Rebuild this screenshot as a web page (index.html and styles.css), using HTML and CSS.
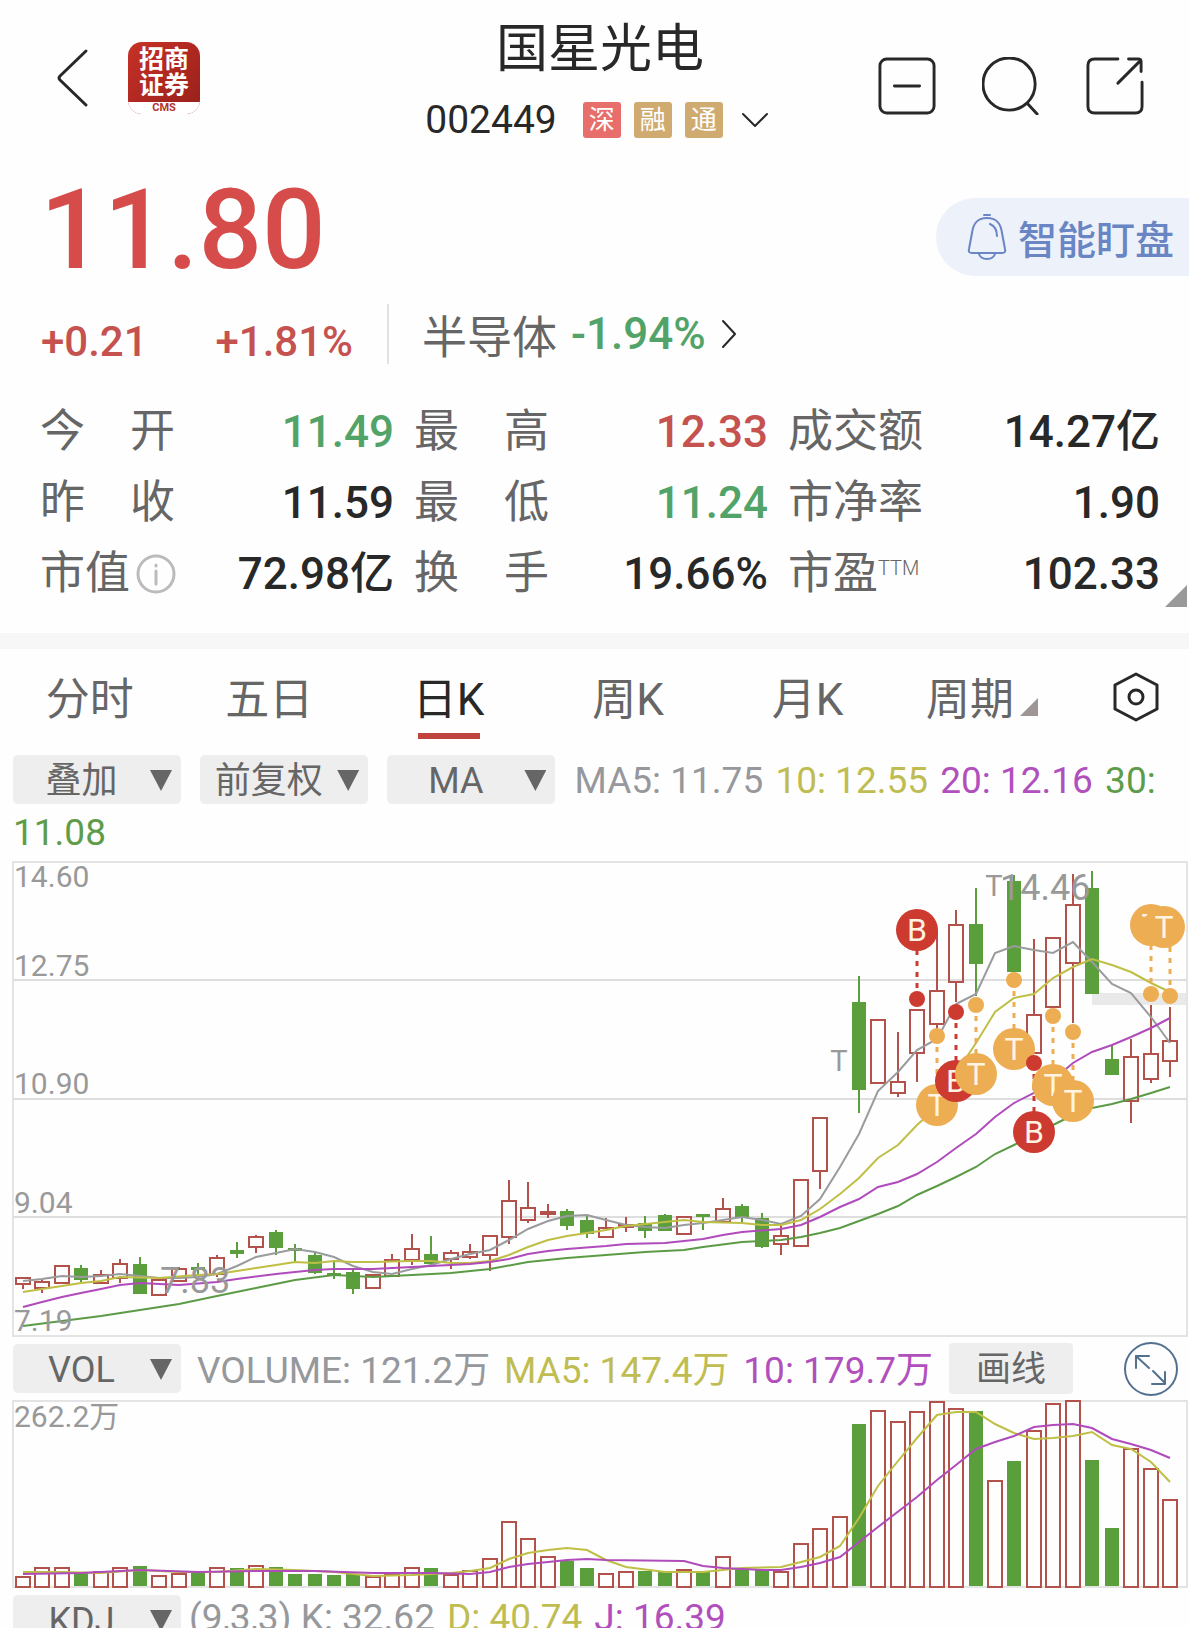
FILE: index.html
```
<!DOCTYPE html>
<html lang="zh-CN">

<head>
  <meta charset="utf-8">
  <meta name="viewport" content="width=device-width, initial-scale=1.0">
  <title>国星光电 002449</title>
  <link rel="stylesheet" href="styles.css">
</head>

<body>
  <header class="header">
    <div class="header-left">
      <button class="icon-button" aria-label="返回">
        <svg width="34" height="60" viewBox="0 0 34 60"><path d="M30 3 4 28q-2 2 0 4L30 57" /></svg>
      </button>
      <div class="broker">
        <div class="broker-name">招商<br>证券</div>
        <div class="broker-code">CMS</div>
      </div>
    </div>

    <div class="header-title">
      <h1>国星光电</h1>
      <div class="code-row">
        <span class="code">002449</span>
        <span class="tag tag-red">深</span>
        <span class="tag">融</span>
        <span class="tag">通</span>
        <button class="icon-button" aria-label="展开">
          <svg width="28" height="16" viewBox="0 0 28 16"><path d="M2 2l12 12L26 2" /></svg>
        </button>
      </div>
    </div>

    <div class="header-right">
      <button class="icon-button" aria-label="删除自选">
        <svg width="58" height="58" viewBox="0 0 60 60"><rect x="2" y="2" width="56" height="56" rx="7" /><path d="M17 30h26" /></svg>
      </button>
      <button class="icon-button" aria-label="搜索">
        <svg width="58" height="58" viewBox="0 0 60 60"><circle cx="28" cy="28" r="27" /><path d="M47 48l10 11" /></svg>
      </button>
      <button class="icon-button" aria-label="分享">
        <svg width="58" height="58" viewBox="0 0 60 60"><path d="M33 2H9Q2 2 2 9v42q0 7 7 7h42q7 0 7-7V26M44 2h10q3 0 3 3v10M56 4 33 27" /></svg>
      </button>
    </div>
  </header>

  <section class="price-row">
    <div class="price">11.80</div>
    <button class="watch-button">
      <svg width="40" height="48" viewBox="0 0 40 48"><path d="M17 2h6M20 5C9 5 6 12 5 20L2 36q-1 4 3 4h30q4 0 3-4l-3-16C34 12 31 5 20 5zM12 40c0 8 16 8 16 0M23 11q7 3 7 12" /></svg>
      智能盯盘
    </button>
  </section>

  <section class="change-row">
    <div class="change">
      <span>+0.21</span>
      <span>+1.81%</span>
    </div>
    <a class="sector" href="#">
      半导体
      <span class="sector-change">-1.94%</span>
      <svg width="18" height="30" viewBox="0 0 18 30"><path d="M3 2l12 13L3 28" /></svg>
    </a>
  </section>

  <section class="stats">
    <div class="stat"><span class="label">今　开</span><span class="down">11.49</span></div>
    <div class="stat"><span class="label">最　高</span><span class="up">12.33</span></div>
    <div class="stat"><span class="label">成交额</span><span>14.27亿</span></div>
    <div class="stat"><span class="label">昨　收</span><span>11.59</span></div>
    <div class="stat"><span class="label">最　低</span><span class="down">11.24</span></div>
    <div class="stat"><span class="label">市净率</span><span>1.90</span></div>
    <div class="stat">
      <span class="label">市值<svg class="info" width="40" height="40" viewBox="0 0 40 40"><circle cx="20" cy="20" r="18" /><path d="M20 17v13M20 11v1" /></svg></span>
      <span>72.98亿</span>
    </div>
    <div class="stat"><span class="label">换　手</span><span>19.66%</span></div>
    <div class="stat"><span class="label">市盈<sup>TTM</sup></span><span>102.33</span></div>
    <span class="stats-corner"></span>
  </section>

  <nav class="tabs">
    <button class="tab">分时</button>
    <button class="tab">五日</button>
    <button class="tab active">日K</button>
    <button class="tab">周K</button>
    <button class="tab">月K</button>
    <button class="tab more">周期</button>
    <button class="icon-button" aria-label="设置">
      <svg width="46" height="50" viewBox="0 0 46 50"><path d="M23 2 44 13v24L23 48 2 37V13z" /><circle cx="23" cy="25" r="7" /></svg>
    </button>
  </nav>

  <section class="ma-bar">
    <label class="picker"><select aria-label="叠加"><option>叠加</option></select></label>
    <label class="picker"><select aria-label="复权"><option>前复权</option></select></label>
    <label class="picker"><select aria-label="主图指标"><option>MA</option></select></label>
    <span class="gray">MA5: 11.75</span>
    <span class="yellow">10: 12.55</span>
    <span class="purple">20: 12.16</span>
    <span class="green">30: 11.08</span>
  </section>

  <svg class="chart" id="kline" viewBox="0 0 1189 476"></svg>

  <section class="indicator">
    <label class="picker"><select aria-label="副图指标"><option>VOL</option></select></label>
    <div class="legend legend-vol">
      <span class="gray">VOLUME: 121.2万</span>
      <span class="yellow">MA5: 147.4万</span>
      <span class="purple">10: 179.7万</span>
    </div>
    <button class="draw-button">画线</button>
    <button class="icon-button expand" aria-label="全屏">
      <svg width="56" height="56" viewBox="0 0 56 56"><circle cx="28" cy="28" r="26" /><path d="M13 27V15h13M13 15l13 12M30 30l12 12M29 43h13V31" /></svg>
    </button>
  </section>

  <svg class="chart" id="volume" viewBox="0 0 1189 188"></svg>

  <section class="indicator">
    <label class="picker"><select aria-label="副图指标二"><option>KDJ</option></select></label>
    <div class="legend">
      <span class="gray">(9,3,3) K: 32.62</span>
      <span class="yellow">D: 40.74</span>
      <span class="purple">J: 16.39</span>
    </div>
  </section>

  <script src="chart.js"></script>
</body>

</html>
```
FILE: styles.css
```
* {
  margin: 0;
  padding: 0;
  box-sizing: border-box;
}

body {
  height: 100vh;
  overflow: hidden;
  background: #fefefe;
  color: #282828;
  font-family: Roboto, "Noto Sans CJK SC", sans-serif;
}

button,
select {
  border: none;
  background: none;
  color: inherit;
  font: inherit;
  cursor: pointer;
}

svg {
  display: block;
  fill: none;
  stroke: #282828;
  stroke-width: 3;
  stroke-linecap: round;
  stroke-linejoin: round;
}

.up {
  color: #c5524f;
}

.down {
  color: #52a368;
}

.gray {
  color: #96989c;
}

.yellow {
  color: #bfbc52;
}

.purple {
  color: #b150bd;
}

.green {
  color: #5f9c4a;
}

/* Header */
.header {
  display: grid;
  grid-template-columns: 1fr auto 1fr;
  padding: 16px 45px 0 56px;
}

.header-left {
  display: flex;
  align-items: center;
  gap: 38px;
}

.broker {
  width: 72px;
  height: 72px;
  border-radius: 14px;
  overflow: hidden;
  background: linear-gradient(135deg, #c73127, #96201a);
  color: #fff;
  text-align: center;
}

.broker-name {
  height: 60px;
  padding-top: 5px;
  font-size: 25px;
  font-weight: 700;
  line-height: 26px;
}

.broker-code {
  height: 12px;
  background: #fff;
  color: #b3352e;
  font-size: 11px;
  font-weight: 700;
  line-height: 12px;
}

.header-title {
  text-align: center;
}

h1 {
  padding-top: 2px;
  font-size: 52px;
  font-weight: 400;
  line-height: 64px;
}

.code-row {
  display: flex;
  align-items: center;
  justify-content: center;
  gap: 13px;
  height: 40px;
  margin-top: 18px;
  padding-right: 6px;
}

.code {
  margin-right: 13px;
  font-size: 39px;
}

.tag {
  width: 38px;
  height: 36px;
  border-radius: 3px;
  background: #d0ab70;
  color: #fff;
  font-size: 26px;
  line-height: 36px;
}

.tag-red {
  background: #e76e6b;
}

.code-row .icon-button {
  margin-left: 5px;
}

.code-row svg,
.sector svg {
  stroke-width: 2;
}

.header-right {
  display: flex;
  align-items: center;
  justify-content: flex-end;
  gap: 46px;
  padding-top: 16px;
}

/* Price */
.price-row {
  display: flex;
  align-items: center;
  justify-content: space-between;
  height: 120px;
  margin-top: 37px;
  padding-left: 40px;
}

.price {
  padding-bottom: 14px;
  color: #d64c4a;
  font-size: 112px;
  font-weight: 500;
  line-height: 106px;
}

.watch-button {
  display: flex;
  align-items: center;
  gap: 11px;
  height: 78px;
  padding: 0 15px 0 31px;
  border-radius: 39px 0 0 39px;
  background: #edf1f9;
  color: #6985c4;
  font-size: 39px;
  font-weight: 500;
}

.watch-button svg {
  stroke: #6985c4;
  stroke-width: 2;
}

.change-row {
  display: flex;
  align-items: flex-start;
  height: 99px;
  padding: 7px 0 0 41px;
}

.change {
  display: flex;
  justify-content: space-between;
  width: 348px;
  padding: 16px 34px 0 0;
  border-right: 2px solid #e2e2e2;
  color: #c5524f;
  font-size: 42px;
  font-weight: 500;
  line-height: 44px;
}

.sector {
  display: flex;
  align-items: center;
  gap: 14px;
  height: 60px;
  padding-left: 33px;
  color: #666;
  font-size: 45px;
  text-decoration: none;
}

.sector-change {
  color: #52a368;
  font-size: 44px;
  font-weight: 500;
}

/* Stats */
.stats {
  position: relative;
  display: grid;
  grid-template-columns: 354fr 354fr 372fr;
  grid-auto-rows: 71px;
  column-gap: 20px;
  padding: 0 29px 24px 40px;
  border-bottom: 16px solid #f7f7f7;
}

.stat {
  display: flex;
  align-items: baseline;
  justify-content: space-between;
  font-size: 44px;
  font-weight: 500;
  line-height: 71px;
  white-space: nowrap;
}

.label {
  display: flex;
  align-items: center;
  color: #666;
  font-size: 45px;
  font-weight: 400;
}

.label sup {
  align-self: flex-start;
  font-size: 20px;
  font-weight: 300;
  line-height: 60px;
}

.info {
  margin-left: 6px;
  stroke: #bbb;
}

.stats-corner {
  position: absolute;
  right: 2px;
  bottom: 26px;
  width: 22px;
  height: 22px;
  background: #999;
  clip-path: polygon(100% 0, 100% 100%, 0 100%);
}

/* Period tabs */
.tabs {
  display: grid;
  grid-template-columns: repeat(6, 179fr) 112fr;
  height: 104px;
}

.tab {
  display: flex;
  align-items: center;
  justify-content: center;
  position: relative;
  padding-bottom: 10px;
  color: #666;
  font-size: 44px;
}

.tab.active {
  color: #282828;
}

.tab.active::after {
  content: "";
  position: absolute;
  bottom: 14px;
  width: 62px;
  height: 6px;
  background: #c0443b;
}

.tab.more {
  gap: 6px;
  padding-right: 10px;
}

.more::after {
  content: "";
  width: 18px;
  height: 18px;
  margin-top: 22px;
  background: #9d9694;
  clip-path: polygon(100% 0, 100% 100%, 0 100%);
}

.tabs .icon-button {
  padding: 0 0 8px 36px;
}

/* Indicator bars */
.ma-bar {
  padding: 2px 13px;
  font-size: 37px;
  line-height: 52px;
}

.ma-bar .picker {
  margin-right: 10px;
}

.ma-bar span {
  margin-right: 3px;
}

.picker {
  display: inline-block;
  position: relative;
  width: 168px;
  height: 49px;
  flex-shrink: 0;
  vertical-align: top;
}

.picker select {
  display: block;
  width: 100%;
  height: 100%;
  padding: 3px 31px 0 0;
  border-radius: 5px;
  background: #eee;
  color: #666;
  font-size: 36px;
  line-height: 46px;
  text-align-last: center;
  appearance: none;
}

.picker::after {
  content: "";
  position: absolute;
  top: 15px;
  right: 9px;
  width: 22px;
  height: 21px;
  background: #666;
  clip-path: polygon(0 0, 100% 0, 50% 100%);
  pointer-events: none;
}

.indicator {
  display: flex;
  align-items: center;
  height: 63px;
  padding: 0 10px 0 13px;
}

.legend {
  display: flex;
  gap: 12px;
  padding: 0 0 4px 8px;
  font-size: 37px;
  white-space: nowrap;
}

.legend-vol {
  flex: 0 1 752px;
  justify-content: space-between;
  padding-left: 16px;
}

.draw-button {
  width: 124px;
  height: 51px;
  margin-left: 16px;
  padding-top: 3px;
  border-radius: 4px;
  background: #eee;
  color: #666;
  font-size: 35px;
  line-height: 48px;
}

.expand {
  margin-left: auto;
}

.expand svg {
  stroke: #53708f;
  stroke-width: 2;
}

/* Charts */
.chart {
  width: 100%;
  stroke-width: 2;
  stroke-linecap: butt;
  stroke-linejoin: miter;
}

.chart text {
  fill: #999;
  stroke: none;
}

.frame {
  stroke: #e4e4e4;
}

.grid {
  stroke: #dedede;
}

.axis {
  font-size: 30px;
}

.peak {
  font-size: 36px;
}

.limit {
  font-size: 29px;
  text-anchor: middle;
}

.gap-zone {
  fill: #e9e9e9;
  stroke: none;
}

.rise {
  stroke: #b2524b;
}

.fall {
  fill: #5a9f3c;
  stroke: #5a9f3c;
}

.line-gray {
  stroke: #999b9d;
}

.line-yellow {
  stroke: #bfbf45;
}

.line-purple {
  stroke: #b04bbb;
}

.line-green {
  stroke: #5c9b45;
}

.buy {
  fill: #cc3a30;
  stroke: #cc3a30;
}

.sell {
  fill: #edad53;
  stroke: #edad53;
}

.leader {
  stroke-width: 3;
  stroke-dasharray: 5 6;
}

.bubble {
  stroke: none;
}

.chart .bubble-text {
  fill: #fff3e2;
  font-size: 32px;
  text-anchor: middle;
}
```
FILE: chart.js
```
const NS = 'http://www.w3.org/2000/svg';
const STEP = 1147 / 59;

// [rise, body top, body bottom, high, low]
const candles = [
  [1, 417, 423, 416, 428], [1, 421, 427, 419, 432], [1, 405, 422, 404, 423], [0, 408, 418, 404, 421],
  [1, 414, 422, 409, 423], [1, 403, 417, 398, 422], [0, 404, 432, 396, 433], [1, 419, 434, 418, 435],
  [1, 408, 420, 406, 421], [0, 407, 408, 402, 414], [1, 397, 413, 394, 416], [0, 390, 392, 381, 397],
  [1, 376, 386, 374, 392], [0, 372, 386, 369, 394], [0, 388, 389, 383, 402], [0, 395, 411, 391, 413],
  [0, 413, 414, 399, 418], [0, 412, 427, 409, 433], [1, 414, 427, 413, 428], [1, 399, 415, 393, 416],
  [1, 388, 399, 373, 404], [0, 394, 402, 375, 404], [1, 392, 398, 389, 408], [1, 391, 396, 383, 398],
  [1, 375, 394, 374, 410], [1, 340, 376, 319, 383], [1, 347, 359, 321, 362], [1, 351, 353, 343, 357],
  [0, 351, 364, 348, 369], [0, 360, 372, 355, 377], [1, 367, 376, 357, 377], [1, 364, 366, 356, 371],
  [0, 363, 369, 355, 377], [0, 355, 369, 353, 370], [1, 356, 373, 355, 374], [0, 354, 355, 353, 369],
  [1, 348, 361, 337, 362], [0, 346, 356, 343, 361], [0, 358, 385, 352, 387], [1, 375, 383, 364, 394],
  [1, 319, 385, 318, 386], [1, 257, 310, 256, 328], null, [0, 142, 228, 115, 252],
  [1, 159, 222, 158, 223], [1, 221, 232, 171, 236], [1, 149, 192, 148, 221], [1, 130, 163, 69, 168],
  [1, 64, 121, 49, 141], [0, 64, 102, 27, 135], null, [0, 21, 110, 14, 110],
  [1, 154, 192, 78, 193], [1, 77, 146, 76, 147], [1, 44, 102, 13, 162], [0, 28, 132, 10, 132],
  [0, 199, 213, 184, 213], [1, 196, 240, 178, 262], [1, 193, 218, 144, 222], [1, 180, 200, 146, 216]
];

const priceLines = {
  gray: '0,420 1,418 2,415 3,416 4,415 5,413 6,415 7,417 8,417 9,416 10,413 11,405 12,396 13,392 14,388 15,391 16,396 17,405 18,411 19,413 20,408 21,404 22,398 23,393 24,389 25,379 26,368 27,360 28,355 29,354 30,359 31,364 32,366 33,367 34,364 35,362 36,359 37,356 38,359 39,363 40,355 41,338 42,306 43,273 44,230 45,211 46,189 47,178 48,143 49,133 50,92 51,85 52,89 53,92 54,81 55,101 56,123 57,132 58,156 59,182',
  yellow: '0,431 1,428 2,425 3,422 4,420 5,416 7,417 9,414 10,413 11,410 12,407 13,404 14,401 15,402 16,400 17,401 18,401 20,400 21,400 22,402 23,402 24,400 25,394 26,386 27,379 28,375 29,372 30,369 31,365 33,361 34,359 35,361 37,362 38,364 39,364 40,359 41,348 42,333 43,317 44,297 45,284 46,264 47,246 48,212 49,182 50,151 51,137 52,133 53,117 54,106 55,98 56,104 57,111 58,122 59,131',
  purple: '0,446 1,441 2,436 3,432 4,428 5,424 6,422 8,424 10,421 11,418 13,413 14,411 15,409 16,408 18,408 20,406 21,405 23,403 24,401 25,398 26,393 27,390 28,388 30,385 31,383 33,382 34,380 35,378 36,374 37,371 39,368 40,364 41,356 42,346 43,338 44,326 45,321 46,313 47,301 48,287 49,273 50,256 51,242 52,232 53,219 54,202 55,191 56,184 57,176 58,167 59,157',
  green: '0,465 2,460 4,455 6,449 8,443 10,435 12,427 14,419 16,414 18,416 20,414 22,412 24,408 26,401 28,397 30,394 32,391 34,389 35,386 37,381 38,380 39,379 40,376 41,372 42,367 43,360 44,353 45,345 46,334 47,325 48,316 49,306 50,293 51,284 52,274 53,264 54,254 55,247 56,243 57,238 58,232 59,226'
};

// [index, kind, dot y, bubble y, bubble x shift]
const trades = [
  [46, 'B', 138, 69, 0], [47, 'T', 175, 244, 0], [48, 'B', 151, 220, 0], [49, 'T', 144, 213, 0],
  [51, 'T', 119, 188, 0], [52, 'B', 202, 271, 0], [53, 'T', 155, 224, 0], [54, 'T', 171, 240, 0],
  [58, 'T', 133, 64, 0], [59, 'T', 135, 66, -6]
];

const volumes = [
  177, 168, 168, 174, 172, 168, 167, 176, 174, 174, 168, 169, 166, 168, 175, 175, 176, 175, 177, 174,
  168, 169, 175, 171, 159, 122, 139, 157, 162, 169, 174, 172, 172, 173, 170, 173, 157, 170, 170, 172,
  144, 129, 117, 25, 11, 22, 12, 2, 9, 12, 81, 62, 31, 4, 1, 61, 129, 49, 69, 100
];
const fallingVolumes = [3, 6, 9, 11, 13, 14, 15, 16, 17, 21, 28, 29, 32, 33, 35, 37, 38, 43, 49, 51, 55, 56];

const volumeLines = {
  yellow: '0,172 2,172 4,173 6,170 8,172 10,172 12,169 14,170 16,172 18,176 20,175 22,173 23,171 24,168 25,159 26,153 27,150 28,148 29,150 30,160 31,167 33,172 35,172 37,168 39,167 40,162 41,157 42,146 43,118 44,86 45,61 46,38 47,15 48,12 49,12 50,24 51,33 52,39 53,38 54,36 55,32 56,45 57,49 58,62 59,82',
  purple: '0,174 3,173 6,170 9,172 12,171 15,171 18,173 21,173 23,174 24,172 25,167 26,164 27,162 28,160 29,159 30,160 34,161 35,166 36,168 38,170 39,170 40,167 41,163 42,157 43,142 44,127 46,97 47,80 48,65 49,49 50,42 51,36 52,27 53,25 54,24 55,28 56,39 57,44 58,50 59,58'
};

const kline = document.getElementById('kline');
const volume = document.getElementById('volume');

function x(i) {
  return Math.round(23 + i * STEP);
}

function add(parent, tag, className, attrs, text) {
  const el = document.createElementNS(NS, tag);
  el.setAttribute('class', className);
  for (const key in attrs) {
    el.setAttribute(key, attrs[key]);
  }
  if (text) {
    el.textContent = text;
  }
  parent.appendChild(el);
}

function drawLines(parent, lines) {
  for (const name in lines) {
    const points = lines[name].split(' ').map(function (pair) {
      const p = pair.split(',');
      return x(Number(p[0])) + ',' + p[1];
    });
    add(parent, 'polyline', 'line-' + name, { points: points.join(' ') });
  }
}

// Frame and price grid
add(kline, 'rect', 'frame', { x: 13, y: 1, width: 1174, height: 474 });
[119, 238, 356].forEach(function (y) {
  add(kline, 'path', 'grid', { d: `M13 ${y}H1187` });
});
add(kline, 'rect', 'gap-zone', { x: 1092, y: 132, width: 94, height: 12 });

candles.forEach(function (c, i) {
  if (!c) return;
  const [rise, top, bottom, high, low] = c;
  const cls = rise ? 'rise' : 'fall';
  const w = rise ? 14 : 12;
  add(kline, 'path', cls, { d: `M${x(i)} ${high}V${top}M${x(i)} ${bottom}V${low}` });
  add(kline, 'rect', cls, { x: x(i) - w / 2, y: top, width: w, height: bottom - top });
});

drawLines(kline, priceLines);

[['14.60', 26], ['12.75', 115], ['10.90', 233], ['9.04', 352], ['7.19', 470]].forEach(function (l) {
  add(kline, 'text', 'axis', { x: 14, y: l[1] }, l[0]);
});
add(kline, 'text', 'peak', { x: 1000, y: 39 }, '14.46');
add(kline, 'text', 'peak', { x: 160, y: 432 }, '7.83');
add(kline, 'text', 'limit', { x: 839, y: 210 }, 'T');
add(kline, 'text', 'limit', { x: 994, y: 35 }, 'T');

// Buy and sell marks
trades.forEach(function (t) {
  const [i, kind, dot, bubble, shift] = t;
  const cls = kind === 'B' ? 'buy' : 'sell';
  const cx = x(i);
  add(kline, 'path', cls + ' leader', { d: `M${cx} ${dot}V${bubble}` });
  add(kline, 'circle', cls + ' bubble', { cx: cx, cy: dot, r: 8 });
  add(kline, 'circle', cls + ' bubble', { cx: cx + shift, cy: bubble, r: 21 });
  add(kline, 'text', 'bubble-text', { x: cx + shift, y: bubble + 11 }, kind);
});

// Volume
add(volume, 'rect', 'frame', { x: 13, y: 1, width: 1174, height: 186 });
add(volume, 'text', 'axis', { x: 14, y: 27 }, '262.2万');
volumes.forEach(function (top, i) {
  const fall = fallingVolumes.includes(i);
  const w = fall ? 12 : 14;
  const bottom = fall ? 185 : 187;
  add(volume, 'rect', fall ? 'fall' : 'rise', { x: x(i) - w / 2, y: top, width: w, height: bottom - top });
});
drawLines(volume, volumeLines);
```
